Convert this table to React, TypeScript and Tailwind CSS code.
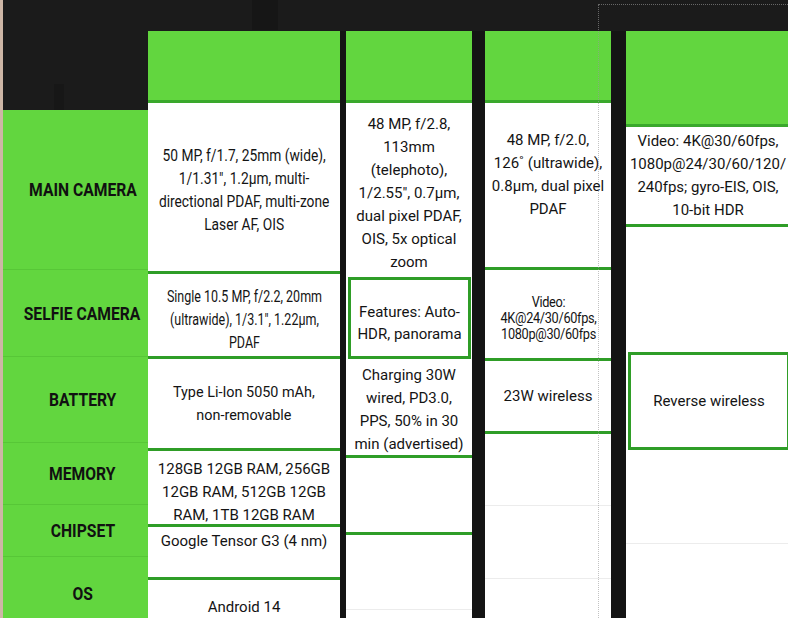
import React from "react";

type Cell = {
  cls: string;
  lines?: string[];
  txt?: string;
};

const LABELS = [
  { name: "MAIN CAMERA", cls: "h-[160px]" },
  { name: "SELFIE CAMERA", cls: "h-[87px]" },
  { name: "BATTERY", cls: "h-[86px]" },
  { name: "MEMORY", cls: "h-[62px]" },
  { name: "CHIPSET", cls: "h-[52px]" },
  { name: "OS", cls: "h-[72px]" },
];

const SEP = "border-b-[3px] border-[#2f9d27]";
const FAINT = "border-b border-[#ececec]";
const BOX = "border-[3px] border-[#2f9d27]";
const TXT = "text-[15px] leading-[23px]";

const COLUMNS: { cls: string; header: string; cells: Cell[] }[] = [
  {
    cls: "w-[192px]",
    header: "h-[72px]",
    cells: [
      {
        cls: `h-[171px] pt-[6px] ${SEP}`,
        txt: "text-[16px] leading-[23px] scale-x-[0.86]",
        lines: ["50 MP, f/1.7, 25mm (wide),", "1/1.31\", 1.2µm, multi-", "directional PDAF, multi-zone", "Laser AF, OIS"],
      },
      {
        cls: `h-[85px] pt-[8px] ${SEP}`,
        txt: "text-[16px] leading-[23px] scale-x-[0.78]",
        lines: ["Single 10.5 MP, f/2.2, 20mm", "(ultrawide), 1/3.1\", 1.22µm,", "PDAF"],
      },
      {
        cls: `h-[92px] ${SEP}`,
        txt: `${TXT} scale-x-[0.96]`,
        lines: ["Type Li-Ion 5050 mAh,", "non-removable"],
      },
      {
        cls: `h-[76px] pt-[9px] ${SEP}`,
        txt: TXT,
        lines: ["128GB 12GB RAM, 256GB", "12GB RAM, 512GB 12GB", "RAM, 1TB 12GB RAM"],
      },
      {
        cls: `h-[53px] !items-start pt-[3px] ${SEP}`,
        txt: TXT,
        lines: ["Google Tensor G3 (4 nm)"],
      },
      { cls: "h-[54px]", txt: TXT, lines: ["Android 14"] },
    ],
  },
  {
    cls: "w-[126px]",
    header: "h-[72px]",
    cells: [
      {
        cls: "h-[174px] pt-[6px]",
        txt: TXT,
        lines: ["48 MP, f/2.8,", "113mm", "(telephoto),", "1/2.55\", 0.7µm,", "dual pixel PDAF,", "OIS, 5x optical", "zoom"],
      },
      {
        cls: `h-[82px] ml-[2px] mr-[1px] pt-[10px] ${BOX}`,
        txt: "text-[15px] leading-[22px]",
        lines: ["Features: Auto-", "HDR, panorama"],
      },
      {
        cls: `h-[99px] pt-[6px] ${SEP}`,
        txt: TXT,
        lines: ["Charging 30W", "wired, PD3.0,", "PPS, 50% in 30", "min (advertised)"],
      },
      { cls: `h-[77px] ${SEP}` },
      { cls: `h-[75px] ${FAINT}` },
      { cls: "h-[60px]" },
    ],
  },
  {
    cls: "w-[126px]",
    header: "h-[72px]",
    cells: [
      {
        cls: `h-[167px] pb-[20px] ${SEP}`,
        txt: TXT,
        lines: ["48 MP, f/2.0,", "126˚ (ultrawide),", "0.8µm, dual pixel", "PDAF"],
      },
      {
        cls: `h-[91px] pt-[8px] ${SEP}`,
        txt: "text-[15px] leading-[16px] tracking-tight scale-x-[0.85]",
        lines: ["Video:", "4K@24/30/60fps,", "1080p@30/60fps"],
      },
      { cls: `h-[73px] ${SEP}`, txt: TXT, lines: ["23W wireless"] },
      { cls: `h-[72px] ${FAINT}` },
      { cls: `h-[73px] ${FAINT}` },
      { cls: "h-[60px]" },
    ],
  },
  {
    cls: "w-[164px]",
    header: "h-[96px]",
    cells: [
      {
        cls: `h-[100px] ${SEP}`,
        txt: TXT,
        lines: ["Video: 4K@30/60fps,", "1080p@24/30/60/120/", "240fps; gyro-EIS, OIS,", "10-bit HDR"],
      },
      { cls: "h-[125px]" },
      { cls: `h-[98px] ml-[2px] ${BOX}`, txt: TXT, lines: ["Reverse wireless"] },
      { cls: `h-[94px] ${FAINT}` },
      { cls: "h-[80px]" },
    ],
  },
];

const GAPS = ["w-[6px]", "w-[13px]", "w-[15px]"];

function SpecCell({ cell }: { cell: Cell }) {
  return (
    <div className={`flex shrink-0 items-center justify-center bg-white text-center text-[#141414] ${cell.cls}`}>
      {cell.lines && (
        <span className={`inline-block whitespace-nowrap ${cell.txt ?? TXT}`}>
          {cell.lines.map((l, i) => (
            <React.Fragment key={i}>
              {i > 0 && <br />}
              {l}
            </React.Fragment>
          ))}
        </span>
      )}
    </div>
  );
}

export default function App() {
  return (
    <div className="relative flex h-[618px] w-[788px] overflow-hidden bg-[#1b1b1b] font-[Roboto,Arial,sans-serif]">
      {/* faint background photo shapes */}
      <div className="absolute left-[252px] top-0 h-[30px] w-[26px] bg-[#161616]" />
      <div className="absolute left-[54px] top-[84px] h-[26px] w-[10px] bg-[#171717]" />

      <div className="w-[3px] shrink-0 bg-[#cdb6a6]" />

      <div className="mt-[110px] flex w-[145px] shrink-0 flex-col bg-[#62d63f]">
        {LABELS.map((l, i) => (
          <div
            key={l.name}
            className={`flex shrink-0 items-center justify-center pl-[14px] ${l.cls} ${i < LABELS.length - 1 ? "border-b border-[#57c737]" : ""}`}
          >
            <span className="inline-block scale-x-[0.87] whitespace-nowrap text-[18px] font-bold text-[#111]">{l.name}</span>
          </div>
        ))}
      </div>

      {COLUMNS.map((col, ci) => (
        <React.Fragment key={ci}>
          {ci > 0 && <div className={`mt-[31px] shrink-0 bg-[#141414] ${GAPS[ci - 1]}`} />}
          <div className={`mt-[31px] flex shrink-0 flex-col bg-white ${col.cls}`}>
            <div className={`shrink-0 border-b-[3px] border-[#3aa82c] bg-[#62d63f] ${col.header}`} />
            {col.cells.map((c, i) => (
              <SpecCell key={i} cell={c} />
            ))}
          </div>
        </React.Fragment>
      ))}

      {/* dotted selection outline */}
      <div className="pointer-events-none absolute bottom-0 left-[598px] right-0 top-[4px] border-l border-t border-dotted border-[#9a9a9a]/60" />
    </div>
  );
}
